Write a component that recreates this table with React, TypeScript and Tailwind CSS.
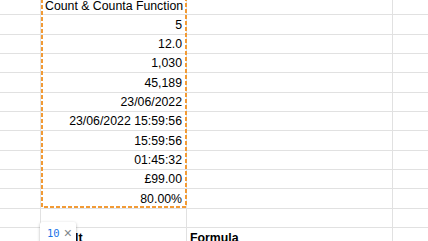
import React from "react";

type Row = { h: number; b?: string; bAlign?: "left" | "right"; bBold?: boolean; c?: string; pb?: number };

const rows: Row[] = [
  { h: 15, b: "Count & Counta Function", bAlign: "left", pb: 1 },
  { h: 20, b: "5" },
  { h: 19, b: "12.0" },
  { h: 19, b: "1,030" },
  { h: 20, b: "45,189" },
  { h: 19, b: "23/06/2022" },
  { h: 19, b: "23/06/2022 15:59:56" },
  { h: 20, b: "15:59:56" },
  { h: 19, b: "01:45:32" },
  { h: 19, b: "£99.00" },
  { h: 20, b: "80.00%" },
  { h: 19 },
  { h: 20, b: "Result", bAlign: "left", bBold: true, c: "Formula" },
];

export default function App() {
  return (
    <div
      className="relative w-[428px] h-[241px] overflow-hidden bg-white text-black"
      style={{ fontFamily: '"Liberation Sans", Arial, sans-serif' }}
    >
      <div className="flex flex-col">
        {rows.map((r, i) => (
          <div key={i} className="flex shrink-0" style={{ height: r.h }}>
            <div className="w-[41px] shrink-0 border-r border-b border-[#e1e1e1]" />
            <div
              className={
                "w-[146px] shrink-0 border-r border-b border-[#e1e1e1] flex items-end px-[4px] text-[12.3px] leading-[14px] whitespace-nowrap overflow-hidden " +
                (r.bAlign === "left" ? "justify-start" : "justify-end") +
                (r.bBold ? " font-bold" : "")
              }
              style={{ paddingBottom: r.pb ?? 2 }}
            >
              {r.b}
            </div>
            <div
              className="w-[206px] shrink-0 border-r border-b border-[#e1e1e1] flex items-end pl-[3px] text-[12.3px] leading-[14px] font-bold whitespace-nowrap"
              style={{ paddingBottom: 2 }}
            >
              {r.c}
            </div>
            <div className="flex-1 border-b border-[#e1e1e1]" />
          </div>
        ))}
      </div>

      {/* copy marquee */}
      <svg
        className="absolute left-[41px] top-[-10px] pointer-events-none"
        width="146"
        height="218"
        viewBox="0 0 146 218"
      >
        <rect
          x="1"
          y="1"
          width="144"
          height="216"
          fill="none"
          stroke="#f29b36"
          strokeWidth="2"
          strokeDasharray="4 2"
        />
      </svg>

      {/* count chip */}
      <div className="absolute left-[40px] top-[222px] w-[36px] h-[24px] bg-white rounded-[2px] shadow-[0_1px_3px_rgba(0,0,0,0.3)] flex items-start pt-[4px] pl-[7px] gap-[4px]">
        <span
          className="text-[10.5px] leading-[14px] text-[#1a73e8]"
          style={{ fontFamily: '"DejaVu Sans Mono", monospace' }}
        >
          10
        </span>
        <span className="text-[14px] leading-[14px] text-[#80868b]">×</span>
      </div>
    </div>
  );
}
